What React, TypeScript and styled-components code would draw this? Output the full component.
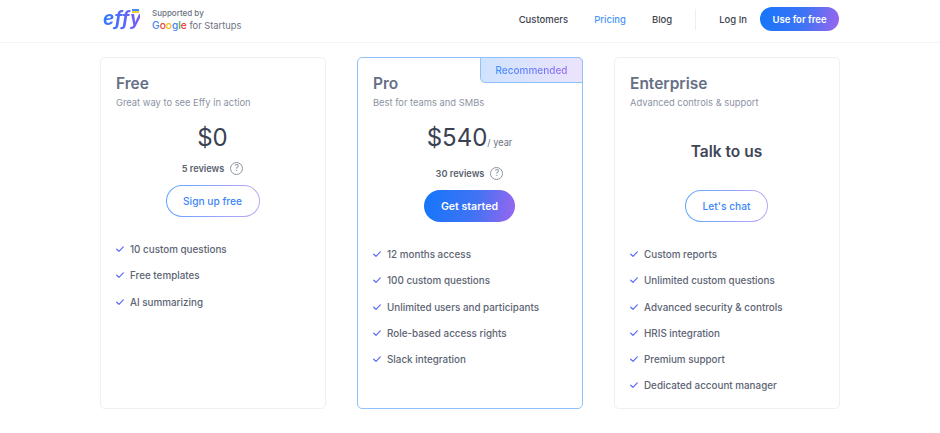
import React from "react";
import styled, { createGlobalStyle } from "styled-components";

const Global = createGlobalStyle`
  html, body { margin: 0; padding: 0; background: #fff; }
  body { font-family: Inter, "Liberation Sans", sans-serif; width: 940px; height: 433px; overflow: hidden; }
  * { box-sizing: border-box; }
`;

const Header = styled.header`
  height: 43px;
  border-bottom: 1px solid #f3f4f6;
  padding: 7px 101px 0 103px;
  display: flex;
  align-items: flex-start;
  justify-content: space-between;
`;
const Brand = styled.div`
  display: flex;
  align-items: flex-start;
  gap: 12px;
`;
const LogoWrap = styled.div`
  position: relative;
  width: 37px;
  height: 26px;
`;
const LogoText = styled.span`
  display: block;
  font-size: 19px;
  line-height: 23px;
  font-weight: 700;
  font-style: italic;
  letter-spacing: 0.3px;
  padding: 0 2px 4px 0;
  background: linear-gradient(90deg, #2f7bff, #7a5cf5);
  -webkit-background-clip: text;
  background-clip: text;
  color: transparent;
`;
const Flag = styled.span`
  position: absolute;
  top: 2px;
  right: 1px;
  width: 7px;
  height: 4px;
  background: linear-gradient(180deg, #3f8df5 50%, #f5cf3a 50%);
`;
const Support = styled.div`
  display: flex;
  flex-direction: column;
  padding-top: 1px;
`;
const SupportedBy = styled.span`
  font-size: 8px;
  line-height: 10px;
  font-weight: 500;
  color: #6b7280;
`;
const GoogleLine = styled.span`
  font-size: 9.3px;
  line-height: 15px;
  color: #6b7280;
`;
const GL = styled.span<{ $c: string }>`
  color: ${(p) => p.$c};
  font-size: 10.2px;
  font-weight: 500;
`;
const Nav = styled.nav`
  display: flex;
  align-items: center;
  height: 24px;
`;
const NavLinks = styled.div`
  display: flex;
  align-items: center;
  gap: 26px;
  margin-right: 23px;
`;
const NavLink = styled.a<{ $active?: boolean }>`
  font-size: 9.5px;
  font-weight: 500;
  color: ${(p) => (p.$active ? "#4b96f8" : "#41454f")};
`;
const NavDivider = styled.span`
  width: 1px;
  height: 21px;
  background: #eceef1;
  margin-right: 23px;
`;
const LogIn = styled(NavLink)`
  margin-right: 13px;
`;
const HeaderCta = styled.button`
  width: 79px;
  height: 24px;
  border: 0;
  border-radius: 12px;
  background: linear-gradient(100deg, #1476fb 0%, #3f73f4 55%, #9a66ee 100%);
  color: #fff;
  font: 600 9.5px Inter, sans-serif;
  padding: 0;
`;

const Cards = styled.main`
  display: flex;
  gap: 31px;
  padding: 14px 0 0 100px;
  align-items: flex-start;
`;
const Card = styled.section<{ $featured?: boolean }>`
  position: relative;
  flex: 0 0 226px;
  height: 352px;
  border: 1px solid ${(p) => (p.$featured ? "#8fc2fc" : "#eef0f2")};
  border-radius: 5px;
  padding: 16px 16px 0 15px;
  display: flex;
  flex-direction: column;
`;
const Ribbon = styled.div`
  position: absolute;
  top: -1px;
  right: -1px;
  width: 103px;
  height: 26px;
  border: 1px solid #8fc2fc;
  border-radius: 0 5px 0 5px;
  background: linear-gradient(90deg, #cfe3fe 0%, #ece3fc 100%);
  display: flex;
  align-items: center;
  justify-content: center;
`;
const RibbonText = styled.span`
  font-size: 10px;
  font-weight: 500;
  background: linear-gradient(90deg, #3b8cfb, #9a6cf0);
  -webkit-background-clip: text;
  background-clip: text;
  color: transparent;
`;
const Title = styled.h2`
  margin: 0;
  font-size: 15.5px;
  line-height: 19px;
  font-weight: 600;
  color: #667085;
`;
const Subtitle = styled.p`
  margin: 2px 0 0;
  font-size: 9.35px;
  line-height: 16px;
  color: #8b93a3;
`;
const PriceRow = styled.div`
  display: flex;
  justify-content: center;
  align-items: baseline;
  margin-top: 11px;
  height: 32px;
`;
const Price = styled.span`
  font-size: 24px;
  line-height: 32px;
  font-weight: 400;
  color: #3a4252;
`;
const Per = styled.span`
  font-size: 9.2px;
  color: #6b7280;
`;
const TalkRow = styled.div`
  text-align: center;
  margin-top: 25px;
  height: 32px;
  font-size: 15.5px;
  line-height: 32px;
  font-weight: 600;
  color: #3f4656;
`;
const Reviews = styled.div<{ $gap: number }>`
  display: flex;
  justify-content: center;
  align-items: center;
  gap: 6px;
  margin-top: ${(p) => p.$gap}px;
  height: 14px;
  font-size: 9.2px;
  font-weight: 600;
  color: #5b6270;
`;
const Hint = styled.span`
  width: 13px;
  height: 13px;
  border-radius: 50%;
  border: 1px solid #8f95a0;
  color: #8f95a0;
  font-size: 8.5px;
  font-weight: 500;
  display: flex;
  align-items: center;
  justify-content: center;
`;
const ButtonRow = styled.div<{ $top: number }>`
  display: flex;
  justify-content: center;
  margin-top: ${(p) => p.$top}px;
`;
const OutlineButton = styled.button<{ $w: number }>`
  width: ${(p) => p.$w}px;
  height: 32px;
  border-radius: 16px;
  border: 1px solid transparent;
  background: linear-gradient(#fff, #fff) padding-box,
    linear-gradient(100deg, #5aa5ff 0%, #c3a6f8 100%) border-box;
  color: #3b86f8;
  font: 500 10.2px Inter, sans-serif;
  padding: 0;
`;
const SolidButton = styled.button`
  width: 91px;
  height: 32px;
  border: 0;
  border-radius: 16px;
  background: linear-gradient(100deg, #1476fb 0%, #3f73f4 55%, #9a66ee 100%);
  color: #fff;
  font: 600 10.6px Inter, sans-serif;
  padding: 0;
`;
const Features = styled.ul`
  list-style: none;
  margin: 24px 0 0;
  padding: 0;
  display: flex;
  flex-direction: column;
  gap: 10.25px;
`;
const Feature = styled.li`
  display: flex;
  align-items: center;
  gap: 6px;
  height: 16px;
  font-size: 9.85px;
  font-weight: 500;
  color: #5d6473;
`;
const CheckSvg = styled.svg`
  width: 8px;
  height: 8px;
  flex: none;
`;

const Check = () => (
  <CheckSvg viewBox="0 0 8 8" fill="none" stroke="#5b6cf5" strokeWidth="1.2" strokeLinecap="round" strokeLinejoin="round">
    <path d="M0.7 4.2 L3 6.3 L7.3 1.9" />
  </CheckSvg>
);

const List = ({ items }: { items: string[] }) => (
  <Features>
    {items.map((t) => (
      <Feature key={t}>
        <Check />
        {t}
      </Feature>
    ))}
  </Features>
);

export default function App() {
  return (
    <>
      <Global />
      <Header>
        <Brand>
          <LogoWrap>
            <LogoText>effy</LogoText>
            <Flag />
          </LogoWrap>
          <Support>
            <SupportedBy>Supported by</SupportedBy>
            <GoogleLine>
              <GL $c="#4285f4">G</GL>
              <GL $c="#ea4335">o</GL>
              <GL $c="#fbbc05">o</GL>
              <GL $c="#4285f4">g</GL>
              <GL $c="#34a853">l</GL>
              <GL $c="#ea4335">e</GL> for Startups
            </GoogleLine>
          </Support>
        </Brand>
        <Nav>
          <NavLinks>
            <NavLink>Customers</NavLink>
            <NavLink $active>Pricing</NavLink>
            <NavLink>Blog</NavLink>
          </NavLinks>
          <NavDivider />
          <LogIn>Log In</LogIn>
          <HeaderCta>Use for free</HeaderCta>
        </Nav>
      </Header>
      <Cards>
        <Card>
          <Title>Free</Title>
          <Subtitle>Great way to see Effy in action</Subtitle>
          <PriceRow>
            <Price>$0</Price>
          </PriceRow>
          <Reviews $gap={7}>
            5 reviews <Hint>?</Hint>
          </Reviews>
          <ButtonRow $top={10}>
            <OutlineButton $w={94}>Sign up free</OutlineButton>
          </ButtonRow>
          <List items={["10 custom questions", "Free templates", "AI summarizing"]} />
        </Card>
        <Card $featured>
          <Ribbon>
            <RibbonText>Recommended</RibbonText>
          </Ribbon>
          <Title>Pro</Title>
          <Subtitle>Best for teams and SMBs</Subtitle>
          <PriceRow>
            <Price>$540</Price>
            <Per>/ year</Per>
          </PriceRow>
          <Reviews $gap={12}>
            30 reviews <Hint>?</Hint>
          </Reviews>
          <ButtonRow $top={10}>
            <SolidButton>Get started</SolidButton>
          </ButtonRow>
          <List
            items={[
              "12 months access",
              "100 custom questions",
              "Unlimited users and participants",
              "Role-based access rights",
              "Slack integration",
            ]}
          />
        </Card>
        <Card>
          <Title>Enterprise</Title>
          <Subtitle>Advanced controls &amp; support</Subtitle>
          <TalkRow>Talk to us</TalkRow>
          <ButtonRow $top={22}>
            <OutlineButton $w={83}>Let's chat</OutlineButton>
          </ButtonRow>
          <List
            items={[
              "Custom reports",
              "Unlimited custom questions",
              "Advanced security & controls",
              "HRIS integration",
              "Premium support",
              "Dedicated account manager",
            ]}
          />
        </Card>
      </Cards>
    </>
  );
}
